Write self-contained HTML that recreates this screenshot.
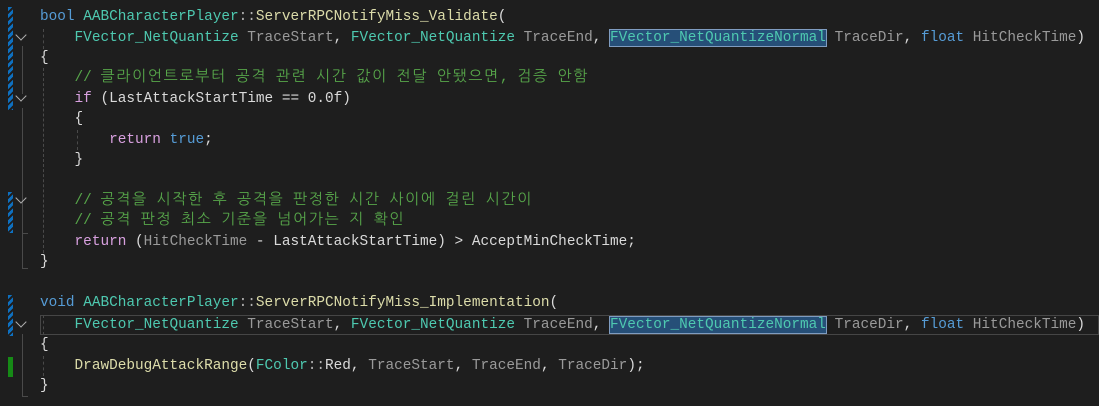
<!DOCTYPE html>
<html><head><meta charset="utf-8"><style>
html,body{margin:0;padding:0;}
body{width:1099px;height:406px;background:#1e1e1e;position:relative;overflow:hidden;font-family:"Liberation Mono","NanumGothic","Noto Sans CJK KR",monospace;font-size:14.4px;color:#dadada;}
.l{position:absolute;left:40px;height:20px;line-height:20px;white-space:pre;}
.k{color:#569cd6}.t{color:#4ec9b0}.f{color:#dcdcaa}.c{color:#57a64a}.p{color:#9a9a9a}.r{color:#d8a0df}.o{color:#b4b4b4}
.c b{font-weight:normal;letter-spacing:1.7px;font-size:15px}
.hl{background:#264f78;outline:1px solid #7f9cc0;}
.bar{position:absolute;left:8px;width:5px;background:repeating-linear-gradient(135deg,#0e70c0 0 3px,#1e1e1e 3px 5px);}
.g{position:absolute;border-left:1px dashed #4a4a4a;width:0}
.v{position:absolute;left:22px;width:1px;background:#4a4a4a}
.h{position:absolute;left:22px;width:6px;height:1px;background:#4a4a4a}
.ch{position:absolute;left:17px;width:7px;height:7px;border-right:1px solid #b0b0b0;border-bottom:1px solid #b0b0b0;transform:rotate(45deg)}
</style></head><body>
<div class="bar" style="top:7px;height:103px"></div>
<div class="bar" style="top:192px;height:41px"></div>
<div class="bar" style="top:295px;height:41px"></div>
<div style="position:absolute;left:8px;top:357px;width:5px;height:20px;background:#168a16"></div>

<div class="ch" style="top:31px"></div>
<div class="v" style="top:46px;height:48px"></div>
<div class="ch" style="top:92px"></div>
<div class="v" style="top:108px;height:160px"></div>
<div class="h" style="top:268px"></div>
<div class="ch" style="top:194px"></div>
<div class="h" style="top:233px;left:22px"></div>
<div class="ch" style="top:318px"></div>
<div class="v" style="top:334px;height:62px"></div>
<div class="h" style="top:396px"></div>

<div class="g" style="left:43px;top:29px;height:20px"></div>
<div class="g" style="left:43px;top:68px;height:185px"></div>
<div class="g" style="left:77px;top:130px;height:20px"></div>
<div class="g" style="left:43px;top:315px;height:20px"></div>
<div class="g" style="left:43px;top:356px;height:20px"></div>

<div style="position:absolute;left:40px;top:315px;width:1059px;height:20px;border:1px solid #464646;box-sizing:border-box"></div>

<div class="l" style="top:7px"><span class="k">bool</span> <span class="t">AABCharacterPlayer</span><span class="o">::</span><span class="f">ServerRPCNotifyMiss_Validate</span>(</div>
<div class="l" style="top:28px">    <span class="t">FVector_NetQuantize</span> <span class="p">TraceStart</span>, <span class="t">FVector_NetQuantize</span> <span class="p">TraceEnd</span>, <span class="t hl">FVector_NetQuantizeNormal</span> <span class="p">TraceDir</span>, <span class="k">float</span> <span class="p">HitCheckTime</span>)</div>
<div class="l" style="top:48px">{</div>
<div class="l" style="top:68px">    <span class="c">// <b>클라이언트로부터</b> <b>공격</b> <b>관련</b> <b>시간</b> <b>값이</b> <b>전달</b> <b>안됐으면</b>, <b>검증</b> <b>안함</b></span></div>
<div class="l" style="top:89px">    <span class="r">if</span> (LastAttackStartTime == 0.0f)</div>
<div class="l" style="top:109px">    {</div>
<div class="l" style="top:130px">        <span class="r">return</span> <span class="k">true</span>;</div>
<div class="l" style="top:150px">    }</div>
<div class="l" style="top:191px">    <span class="c">// <b>공격을</b> <b>시작한</b> <b>후</b> <b>공격을</b> <b>판정한</b> <b>시간</b> <b>사이에</b> <b>걸린</b> <b>시간이</b></span></div>
<div class="l" style="top:211px">    <span class="c">// <b>공격</b> <b>판정</b> <b>최소</b> <b>기준을</b> <b>넘어가는</b> <b>지</b> <b>확인</b></span></div>
<div class="l" style="top:232px">    <span class="r">return</span> (<span class="p">HitCheckTime</span> - LastAttackStartTime) &gt; AcceptMinCheckTime;</div>
<div class="l" style="top:252px">}</div>
<div class="l" style="top:293px"><span class="k">void</span> <span class="t">AABCharacterPlayer</span><span class="o">::</span><span class="f">ServerRPCNotifyMiss_Implementation</span>(</div>
<div class="l" style="top:315px">    <span class="t">FVector_NetQuantize</span> <span class="p">TraceStart</span>, <span class="t">FVector_NetQuantize</span> <span class="p">TraceEnd</span>, <span class="t hl">FVector_NetQuantizeNormal</span> <span class="p">TraceDir</span>, <span class="k">float</span> <span class="p">HitCheckTime</span>)</div>
<div class="l" style="top:335px">{</div>
<div class="l" style="top:356px">    <span class="f">DrawDebugAttackRange</span>(<span class="t">FColor</span><span class="o">::</span>Red, <span class="p">TraceStart</span>, <span class="p">TraceEnd</span>, <span class="p">TraceDir</span>);</div>
<div class="l" style="top:376px">}</div>
</body></html>
